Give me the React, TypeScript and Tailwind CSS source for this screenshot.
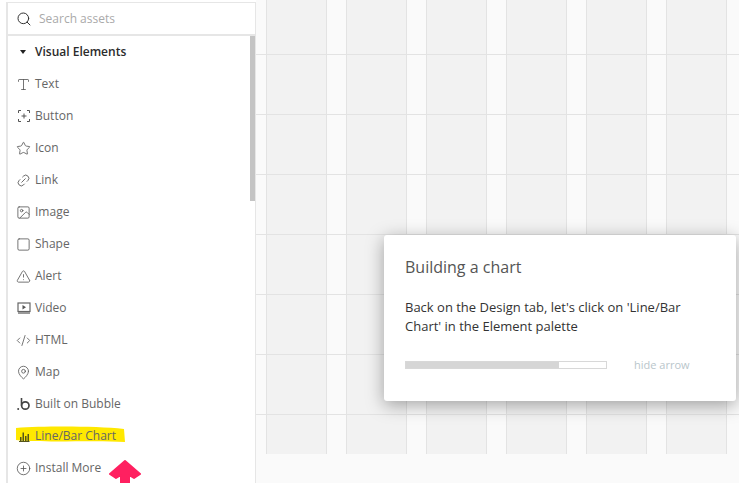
import { CirclePlus, Image, Link2, MapPin, Search, Square, Star, TriangleAlert, CodeXml, Type } from "lucide-react";
import React from "react";

const font = { fontFamily: '"Open Sans", sans-serif' };

const ButtonIcon = () => (
  <svg width="14" height="14" viewBox="0 0 14 14" fill="none" stroke="#555" strokeWidth="1">
    <path d="M4 1.5H1.5V4M10 1.5h2.5V4M4 12.5H1.5V10M10 12.5h2.5V10M7 4.5v5M4.5 7h5" />
  </svg>
);

const VideoIcon = () => (
  <svg width="14" height="14" viewBox="0 0 14 14" fill="none">
    <rect x="1" y="2" width="12" height="8.5" stroke="#666" strokeWidth="1.2" />
    <path d="M5.5 4l3.5 2.2-3.5 2.2z" fill="#555" />
    <rect x="1" y="11" width="12" height="2" fill="#999" />
  </svg>
);

const BubbleIcon = () => (
  <svg width="14" height="14" viewBox="0 0 14 14" fill="none">
    <circle cx="1.2" cy="12" r="1" fill="#444" />
    <path d="M4.5 1v7.5" stroke="#444" strokeWidth="1.6" />
    <circle cx="8.3" cy="8.5" r="3.7" stroke="#444" strokeWidth="1.7" />
  </svg>
);

const ChartIcon = () => (
  <svg width="14" height="14" viewBox="0 0 14 14" fill="#55551a">
    <rect x="3" y="8" width="1.5" height="4" />
    <rect x="5.5" y="3.5" width="1.5" height="8.5" />
    <rect x="8" y="7" width="1.5" height="5" />
    <rect x="10.5" y="5" width="1.5" height="7" />
    <rect x="2" y="12" width="10.5" height="1" />
  </svg>
);

const iconProps = { size: 15, color: "#555", strokeWidth: 1.3 };

const items: { label: string; icon: React.ReactNode }[] = [
  { label: "Text", icon: <Type {...iconProps} /> },
  { label: "Button", icon: <ButtonIcon /> },
  { label: "Icon", icon: <Star {...iconProps} /> },
  { label: "Link", icon: <Link2 {...iconProps} className="-rotate-45" /> },
  { label: "Image", icon: <Image {...iconProps} /> },
  { label: "Shape", icon: <Square {...iconProps} /> },
  { label: "Alert", icon: <TriangleAlert {...iconProps} /> },
  { label: "Video", icon: <VideoIcon /> },
  { label: "HTML", icon: <CodeXml {...iconProps} /> },
  { label: "Map", icon: <MapPin {...iconProps} /> },
  { label: "Built on Bubble", icon: <BubbleIcon /> },
  { label: "Line/Bar Chart", icon: <ChartIcon /> },
  { label: "Install More", icon: <CirclePlus {...iconProps} /> },
];

const Sidebar = () => {
  return (
    <div className="relative w-[256px] h-full pt-[2px] pl-[6px] bg-white shrink-0 overflow-hidden">
      <div className="h-full border-l-2 border-r border-t border-[#e6e6e6]">
        <div className="flex items-center h-[33px] pl-[8px] gap-[7px] border-b-2 border-[#e6e6e6]">
          <Search size={16} color="#333" strokeWidth={1.5} />
          <span className="text-[12px] text-[#aaa]">Search assets</span>
        </div>
        <div className="flex items-center h-[32px] pl-[12px] gap-[9px]">
          <span className="w-0 h-0 border-x-[3.5px] border-x-transparent border-t-[4px] border-t-[#222]" />
          <span className="text-[12px] font-semibold text-[#2b2b2b]">Visual Elements</span>
        </div>
        {items.map((item) => (
          <div key={item.label} className="relative flex items-center h-[32px] pl-[8px] gap-[4px]">
            {item.label === "Line/Bar Chart" && (
              <svg className="absolute left-[7px] top-[5px]" width="112" height="22" viewBox="0 0 112 22">
                <path d="M1 3C30 1 80 1 109 4L110 17C80 15 30 18 1 15z" fill="#ffe800" />
              </svg>
            )}
            <span className="relative flex items-center justify-center w-[15px]">{item.icon}</span>
            <span className="relative text-[12px] text-[#666]">{item.label}</span>
          </div>
        ))}
      </div>
      <div className="absolute left-[250px] top-[36px] w-[5px] h-[165px] bg-[#c4c4c4]" />
      <svg className="absolute left-[108px] top-[459px]" width="34" height="24" viewBox="0 0 34 24">
        <path d="M17 2L32 15 26 19 21 16V24H13V16L8 19 2 15z" fill="#ff2060" stroke="#ff2060" strokeWidth="2" strokeLinejoin="round" />
      </svg>
    </div>
  );
};

const Canvas = () => {
  return (
    <div className="relative flex-1 h-full bg-[#fafafa]">
      <div className="h-[454px] flex pl-[10px] pr-[12px] bg-[repeating-linear-gradient(to_bottom,transparent_0,transparent_54px,#e3e3e3_54px,#e3e3e3_55px,transparent_55px,transparent_60px)]">
        {[0, 1, 2, 3, 4, 5].map((i) => (
          <div
            key={i}
            className="w-[61px] mr-[19px] border-x border-[#e3e3e3] bg-[#f2f2f2] bg-[repeating-linear-gradient(to_bottom,transparent_0,transparent_54px,#e3e3e3_54px,#e3e3e3_55px,transparent_55px,transparent_60px)]"
          />
        ))}
      </div>
    </div>
  );
};

const Popup = () => {
  return (
    <div className="absolute left-[384px] top-[235px] w-[352px] h-[166px] pt-[21px] pl-[21px] pr-[40px] bg-white rounded-[3px] shadow-[0_4px_18px_rgba(0,0,0,0.35)]">
      <h2 className="text-[16px] leading-[22px] text-[#555]">Building a chart</h2>
      <p className="mt-[20px] text-[13px] leading-[19px] text-[#333]">
        Back on the Design tab, let's click on 'Line/Bar Chart' in the Element palette
      </p>
      <div className="flex items-center mt-[21px] gap-[27px]">
        <div className="w-[202px] h-[8px] bg-white border border-[#d8d8d8]">
          <div className="w-[153px] h-full bg-[#d6d6d6]" />
        </div>
        <span className="text-[11px] leading-[16px] whitespace-nowrap text-[#b9c6cb]">hide arrow</span>
      </div>
    </div>
  );
};

export default function App() {
  return (
    <div className="relative flex w-[739px] h-[483px] overflow-hidden" style={font}>
      <Sidebar />
      <Canvas />
      <Popup />
    </div>
  );
}
